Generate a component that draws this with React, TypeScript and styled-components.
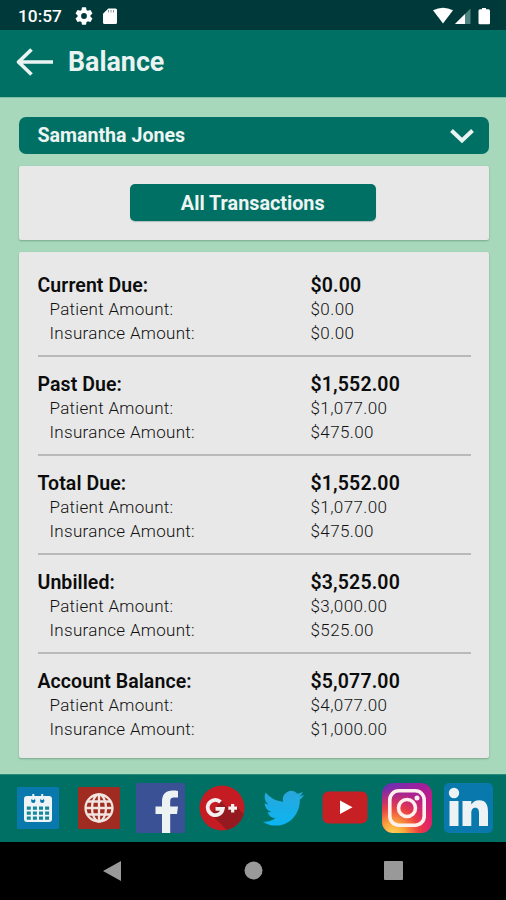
import React from "react";
import styled, { createGlobalStyle } from "styled-components";

const GlobalStyle = createGlobalStyle`
  * { box-sizing: border-box; }
  body { margin: 0; background: #000; font-family: Roboto, "Liberation Sans", sans-serif; }
  svg { display: block; flex: none; }
`;

const Screen = styled.div`
  width: 506px;
  height: 900px;
  display: flex;
  flex-direction: column;
  overflow: hidden;
  background: #a8d8bb;
`;

const StatusBar = styled.div`
  height: 30px;
  flex: none;
  display: flex;
  align-items: center;
  justify-content: space-between;
  padding: 1px 15px 0 18px;
  background: #003939;
`;

const StatusGroup = styled.div<{ $gap: number }>`
  display: flex;
  align-items: center;
  gap: ${(p) => p.$gap}px;
`;

const Clock = styled.span`
  width: 44px;
  font-size: 17.3px;
  font-weight: 500;
  line-height: 20px;
  white-space: nowrap;
  color: #fff;
`;

const Header = styled.header`
  height: 67px;
  flex: none;
  display: flex;
  align-items: center;
  gap: 15px;
  padding: 0 16px 3px 15px;
  background: #007065;
`;

const Title = styled.h1`
  margin: 0;
  font-size: 26.8px;
  line-height: 32px;
  font-weight: 700;
  color: #e9f3f1;
`;

const Content = styled.main`
  flex: 1;
  display: flex;
  flex-direction: column;
  padding: 19px 17.5px 16px 19px;
  border-top: 1px solid #7dbfa6;
`;

const Select = styled.button`
  height: 37px;
  flex: none;
  display: flex;
  align-items: center;
  justify-content: space-between;
  margin: 0;
  padding: 1px 15px 0 18.5px;
  border: 0;
  border-radius: 7px;
  background: #007065;
  color: #edf5f3;
  font: 700 19.6px/24px Roboto, "Liberation Sans", sans-serif;
`;

const Card = styled.section`
  flex: none;
  border-radius: 2px;
  background: #e8e8e8;
  box-shadow: 0 1px 2px rgba(30, 80, 55, 0.35);
`;

const ActionCard = styled(Card)`
  height: 74px;
  margin-top: 12px;
  display: flex;
  justify-content: center;
  align-items: center;
  padding: 0 2px 1px 0;
`;

const ActionButton = styled.button`
  width: 246px;
  height: 37px;
  padding: 3px 0 0;
  border: 0;
  border-radius: 5px;
  background: #007065;
  color: #edf5f3;
  font: 700 19.8px/24px Roboto, "Liberation Sans", sans-serif;
  box-shadow: 0 1px 1px rgba(0, 60, 50, 0.25);
`;

const BalanceCard = styled(Card)`
  height: 506px;
  margin-top: 12px;
  padding: 6px 18px 0 18.5px;
`;

const Group = styled.div`
  height: 99px;
  display: flex;
  flex-direction: column;
  padding-top: 15px;
  border-bottom: 2px solid #b9b9b9;
  &:last-child { border-bottom: 0; }
`;

const Total = styled.div`
  display: grid;
  grid-template-columns: 273px 1fr;
  height: 24px;
  line-height: 25px;
  font-size: 19.5px;
  font-weight: 600;
  letter-spacing: 0.08px;
  color: #0c0c0c;
`;

const Detail = styled.div`
  display: grid;
  grid-template-columns: 261px 1fr;
  height: 23.5px;
  padding-left: 12px;
  line-height: 24px;
  font-size: 17px;
  font-weight: 300;
  letter-spacing: 0.3px;
  color: #111;
`;

const Amount = styled.span<{ $spacing: number }>`
  letter-spacing: ${(p) => p.$spacing}px;
`;

const SocialBar = styled.footer`
  height: 68px;
  flex: none;
  display: grid;
  grid-template-columns: repeat(8, 61.5px);
  align-items: center;
  justify-items: center;
  padding: 0 7px 2px;
  border-top: 1px solid #2b8b7a;
  background: #007065;
`;

const NavBar = styled.nav`
  height: 58px;
  flex: none;
  display: flex;
  align-items: center;
  justify-content: space-between;
  padding: 0 103px 1px 102px;
  background: #000;
`;

const rows = [
  ["Current Due:", "$0.00", "$0.00", "$0.00"],
  ["Past Due:", "$1,552.00", "$1,077.00", "$475.00"],
  ["Total Due:", "$1,552.00", "$1,077.00", "$475.00"],
  ["Unbilled:", "$3,525.00", "$3,000.00", "$525.00"],
  ["Account Balance:", "$5,077.00", "$4,077.00", "$1,000.00"],
];

const GearIcon = () => (
  <svg width="18" height="18" viewBox="2 2 20 20">
    <path fill="#fff" d="M19.14 12.94c.04-.3.06-.61.06-.94s-.02-.64-.07-.94l2.03-1.58a.49.49 0 0 0 .12-.61l-1.92-3.32a.49.49 0 0 0-.59-.22l-2.39.96c-.5-.38-1.03-.7-1.62-.94l-.36-2.54a.48.48 0 0 0-.48-.41h-3.84a.47.47 0 0 0-.47.41l-.36 2.54c-.59.24-1.13.57-1.62.94l-2.39-.96a.48.48 0 0 0-.59.22L2.74 8.87a.48.48 0 0 0 .12.61l2.03 1.58c-.05.3-.09.63-.09.94s.02.64.07.94l-2.03 1.58a.49.49 0 0 0-.12.61l1.92 3.32c.12.22.37.29.59.22l2.39-.96c.5.38 1.03.7 1.62.94l.36 2.54c.05.24.24.41.48.41h3.84c.24 0 .44-.17.47-.41l.36-2.54c.59-.24 1.13-.56 1.62-.94l2.39.96c.22.08.47 0 .59-.22l1.92-3.32a.48.48 0 0 0-.12-.61zM12 15.2a3.2 3.2 0 1 1 0-6.4 3.2 3.2 0 0 1 0 6.4z" />
  </svg>
);

const CardIcon = () => (
  <svg width="16" height="16" viewBox="-1 0 16 16">
    <path fill="#fff" d="M5.3.5h7.2A1.5 1.5 0 0 1 14 2v12.5a1.5 1.5 0 0 1-1.500 1.500h-11A1.500 1.500 0 0 1 0 14.500V5.800z" />
    <path stroke="#809b9b" strokeWidth="1" d="M5.500 2v2.500M8 2v2.500M10.500 2v2.500" />
  </svg>
);

const SignalIcons = () => (
  <svg width="58" height="18" viewBox="0 0 58 18">
    <path fill="#fff" d="M0 3.300Q10 -1.800 20 3.300L10 16.500z" />
    <path fill="#4f8580" d="M37.500 1.500V17H22z" />
    <path fill="#fff" d="M32 7V17H22z" />
    <path fill="#fff" d="M49 1h4v1.200h2.500A1.500 1.500 0 0 1 57 3.700V16a1.200 1.200 0 0 1-1.200 1.200h-9.100A1.200 1.200 0 0 1 45.500 16V3.700A1.500 1.500 0 0 1 47 2.200h2z" />
  </svg>
);

const BackArrow = () => (
  <svg width="38" height="30" viewBox="0 0 38 30" fill="none" stroke="#e9f3f1" strokeWidth="3.700" strokeLinejoin="round">
    <path d="M16.500 2.500L3.500 15l13 12.500M3.500 15H38" />
  </svg>
);

const Chevron = () => (
  <svg width="24" height="15" viewBox="0 0 24 15" fill="none" stroke="#e9f3f1" strokeWidth="4">
    <path d="M1.500 1.500L12 11.500L22.500 1.500" />
  </svg>
);

const CalendarIcon = () => (
  <svg width="42" height="42" viewBox="0 0 42 42">
    <rect width="42" height="42" rx="1" fill="#0878ad" />
    <rect x="7" y="9" width="28" height="26" rx="3" fill="#eef4f5" />
    <g fill="#0878ad">
      <circle cx="16.300" cy="13.800" r="2.200" /><circle cx="25.200" cy="13.800" r="2.200" />
    </g>
    <path d="M16.300 7v6M25.200 7v6" stroke="#eef4f5" strokeWidth="2" />
    <path d="M9.800 21.200h23M9.800 26.200h23M9.800 31.200h23" stroke="#14889b" strokeWidth="3.200" strokeDasharray="4 2.100" />
  </svg>
);

const GlobeIcon = () => (
  <svg width="42" height="42" viewBox="0 0 42 42">
    <rect width="42" height="42" rx="1" fill="#a02b21" />
    <g fill="none" stroke="#f2e5df" strokeWidth="2.300">
      <circle cx="21" cy="21" r="13.500" />
      <ellipse cx="21" cy="21" rx="7" ry="13.500" />
      <path d="M21 7.500v27M7.500 21h27M9.500 14.500h23M9.500 27.500h23" />
    </g>
  </svg>
);

const FacebookIcon = () => (
  <svg width="49" height="50" viewBox="0 0 49 50">
    <rect width="49" height="50" rx="1" fill="#3b5196" />
    <path fill="#edf2f3" d="M26 50V31H19.500v-7.500H26v-5C26 11.300 30 7.500 36.500 7.500c2.200 0 4 .2 5.500.4v6.600h-4c-3 0-3.800 1.500-3.800 4v5H42L41 31h-6.800V50z" />
  </svg>
);

const GooglePlusIcon = () => (
  <svg width="46" height="46" viewBox="0 0 46 46">
    <circle cx="23" cy="23" r="22.500" fill="#c41c22" />
    <path fill="#951a1f" d="M12 29L27.500 44.800A22.500 22.500 0 0 0 44.800 29L35.500 19.500 28 22.500 22 16z" />
    <path fill="none" stroke="#f4eeee" strokeWidth="3.800" d="M21.500 17A7.600 7.600 0 1 0 23.800 23.800H16.500" />
    <path stroke="#f4eeee" strokeWidth="3.200" d="M29.300 23.200h8.700M33.650 18.900v8.600" />
  </svg>
);

const TwitterIcon = () => (
  <svg width="41" height="36" viewBox="0 1.700 24 20.300" preserveAspectRatio="none">
    <defs>
      <linearGradient id="bird" x2="0" y2="1">
        <stop stopColor="#29a6db" /><stop offset="1" stopColor="#0bb5f3" />
      </linearGradient>
    </defs>
    <path fill="url(#bird)" d="M23.950 4.570a10 10 0 0 1-2.820.770 4.960 4.960 0 0 0 2.160-2.720c-.950.550-2 .960-3.130 1.180a4.920 4.920 0 0 0-8.380 4.480C7.690 8.100 4.070 6.130 1.640 3.160a4.820 4.820 0 0 0-.670 2.480c0 1.710.870 3.210 2.190 4.100a4.900 4.900 0 0 1-2.230-.620v.060a4.920 4.920 0 0 0 3.950 4.830 5 5 0 0 1-2.210.080 4.940 4.940 0 0 0 4.600 3.420A9.870 9.870 0 0 1 0 19.540a14 14 0 0 0 7.550 2.210c9.050 0 14-7.500 14-13.980 0-.210 0-.420-.020-.630a9.940 9.940 0 0 0 2.460-2.550z" />
  </svg>
);

const YoutubeIcon = () => (
  <svg width="46" height="33" viewBox="0 0 46 33">
    <rect x=".5" y=".5" width="45" height="32" rx="6" fill="#c72024" />
    <path fill="#fff" d="M18 9.500v13.500l12.500-6.700z" />
  </svg>
);

const InstagramIcon = () => (
  <svg width="50" height="50" viewBox="0 0 50 50">
    <defs>
      <linearGradient id="insta" x1="0.1" y1="0" x2=".9" y2=".8">
        <stop stopColor="#6731b5" /><stop offset=".45" stopColor="#a0209d" /><stop offset="1" stopColor="#df1974" />
      </linearGradient>
      <radialGradient id="glow" cx=".22" cy="1.020" r=".95">
        <stop stopColor="#ffd557" /><stop offset=".25" stopColor="#fba43b" />
        <stop offset=".55" stopColor="#ee423e" stopOpacity=".95" /><stop offset="1" stopColor="#dc2464" stopOpacity="0" />
      </radialGradient>
    </defs>
    <rect width="50" height="50" rx="11" fill="url(#insta)" />
    <rect width="50" height="50" rx="11" fill="url(#glow)" />
    <g fill="none" stroke="#fff0ee" strokeWidth="3.600">
      <rect x="7.800" y="7.800" width="34.400" height="34.400" rx="9" />
      <circle cx="25" cy="25" r="8.500" />
    </g>
    <circle cx="35" cy="15" r="2.500" fill="#fff0ee" />
  </svg>
);

const LinkedInIcon = () => (
  <svg width="49" height="50" viewBox="0 0 49 50">
    <rect width="49" height="50" rx="5" fill="#0878ad" />
    <g fill="#edf3f5">
      <circle cx="10" cy="10" r="5.200" />
      <path d="M5.500 18h9v25h-9zM18.500 18h8.800v3.500c1.700-2.700 4.500-4.200 7.700-4.200 7 0 9 4.500 9 11.700v14h-9V30.500c0-3.400-.7-5.700-3.700-5.700-3.200 0-4 2.500-4 5.700V43h-8.800z" />
    </g>
  </svg>
);

export default function App() {
  return (
    <Screen>
      <GlobalStyle />
      <StatusBar>
        <StatusGroup $gap={9}>
          <StatusGroup $gap={13}><Clock>10:57</Clock><GearIcon /></StatusGroup>
          <CardIcon />
        </StatusGroup>
        <SignalIcons />
      </StatusBar>
      <Header><BackArrow /><Title>Balance</Title></Header>
      <Content>
        <Select><span>Samantha Jones</span><Chevron /></Select>
        <ActionCard><ActionButton>All Transactions</ActionButton></ActionCard>
        <BalanceCard>
          {rows.map(([label, total, patient, insurance]) => (
            <Group key={label}>
              <Total><span>{label}</span><Amount $spacing={0.15}>{total}</Amount></Total>
              <Detail><span>Patient Amount:</span><Amount $spacing={0.4}>{patient}</Amount></Detail>
              <Detail><span>Insurance Amount:</span><Amount $spacing={0.4}>{insurance}</Amount></Detail>
            </Group>
          ))}
        </BalanceCard>
      </Content>
      <SocialBar>
        <CalendarIcon /><GlobeIcon /><FacebookIcon /><GooglePlusIcon />
        <TwitterIcon /><YoutubeIcon /><InstagramIcon /><LinkedInIcon />
      </SocialBar>
      <NavBar>
        <svg width="20" height="22" viewBox="0 0 20 22"><path fill="#999" d="M19 1v20L1 11z" /></svg>
        <svg width="19" height="19" viewBox="0 0 19 19"><circle cx="9.500" cy="9.500" r="9" fill="#999" /></svg>
        <svg width="19" height="19" viewBox="0 0 19 19"><rect width="19" height="19" rx="1" fill="#999" /></svg>
      </NavBar>
    </Screen>
  );
}
